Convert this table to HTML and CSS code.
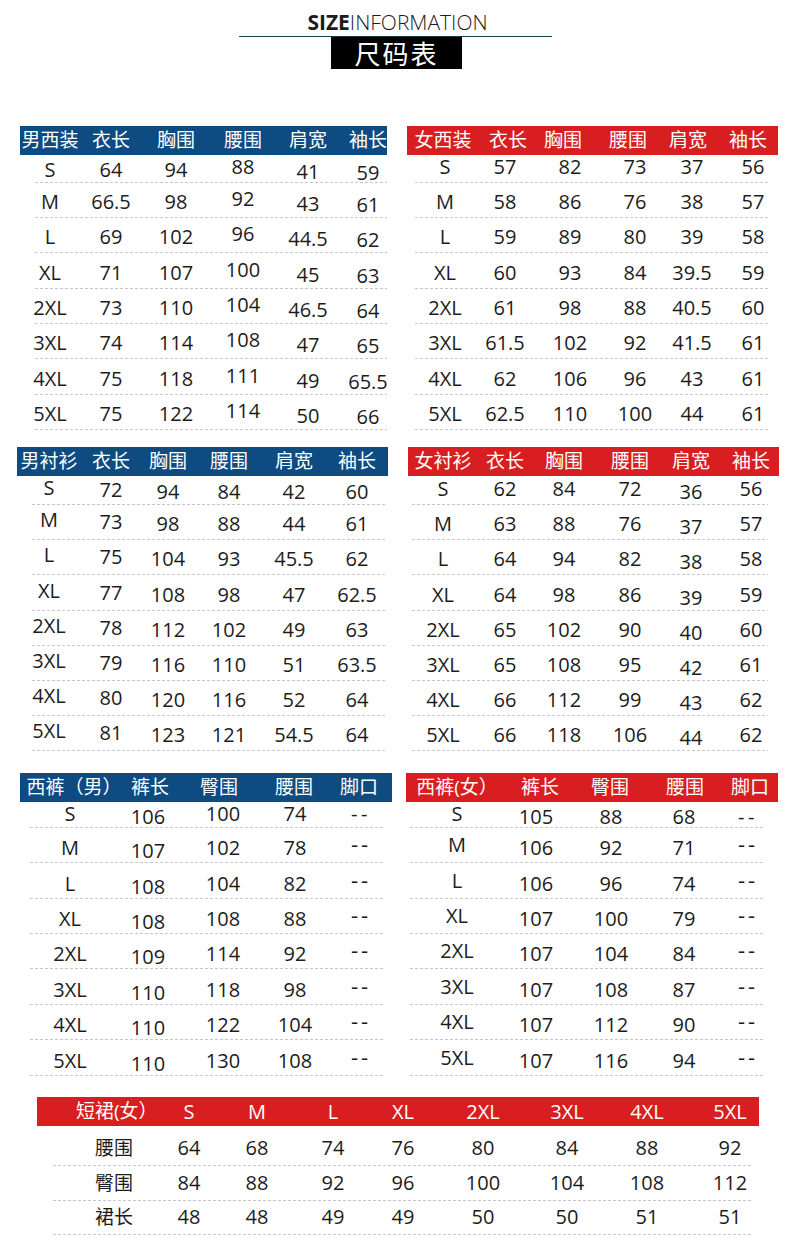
FILE: index.html
```html
<!DOCTYPE html>
<html lang="zh-CN">
<head>
<meta charset="utf-8">
<title>尺码表</title>
<link rel="stylesheet" href="styles.css">
</head>
<body>
<h1 class="title"><b>SIZE</b><span>INFORMATION</span></h1>
<div class="rule"></div>
<div class="badge">尺码表</div>

<div class="pair p1">
  <section class="tbl l1">
    <div class="hd blue"><span>男西装</span><span>衣长</span><span>胸围</span><span>腰围</span><span>肩宽</span><span>袖长</span></div>
    <div class="row"><span>S</span><span>64</span><span>94</span><span>88</span><span>41</span><span>59</span></div>
    <div class="row"><span>M</span><span>66.5</span><span>98</span><span>92</span><span>43</span><span>61</span></div>
    <div class="row"><span>L</span><span>69</span><span>102</span><span>96</span><span>44.5</span><span>62</span></div>
    <div class="row"><span>XL</span><span>71</span><span>107</span><span>100</span><span>45</span><span>63</span></div>
    <div class="row"><span>2XL</span><span>73</span><span>110</span><span>104</span><span>46.5</span><span>64</span></div>
    <div class="row"><span>3XL</span><span>74</span><span>114</span><span>108</span><span>47</span><span>65</span></div>
    <div class="row"><span>4XL</span><span>75</span><span>118</span><span>111</span><span>49</span><span>65.5</span></div>
    <div class="row"><span>5XL</span><span>75</span><span>122</span><span>114</span><span>50</span><span>66</span></div>
  </section>
  <section class="tbl r1">
    <div class="hd red"><span>女西装</span><span>衣长</span><span>胸围</span><span>腰围</span><span>肩宽</span><span>袖长</span></div>
    <div class="row"><span>S</span><span>57</span><span>82</span><span>73</span><span>37</span><span>56</span></div>
    <div class="row"><span>M</span><span>58</span><span>86</span><span>76</span><span>38</span><span>57</span></div>
    <div class="row"><span>L</span><span>59</span><span>89</span><span>80</span><span>39</span><span>58</span></div>
    <div class="row"><span>XL</span><span>60</span><span>93</span><span>84</span><span>39.5</span><span>59</span></div>
    <div class="row"><span>2XL</span><span>61</span><span>98</span><span>88</span><span>40.5</span><span>60</span></div>
    <div class="row"><span>3XL</span><span>61.5</span><span>102</span><span>92</span><span>41.5</span><span>61</span></div>
    <div class="row"><span>4XL</span><span>62</span><span>106</span><span>96</span><span>43</span><span>61</span></div>
    <div class="row"><span>5XL</span><span>62.5</span><span>110</span><span>100</span><span>44</span><span>61</span></div>
  </section>
</div>

<div class="pair p2">
  <section class="tbl l2">
    <div class="hd blue"><span>男衬衫</span><span>衣长</span><span>胸围</span><span>腰围</span><span>肩宽</span><span>袖长</span></div>
    <div class="row"><span>S</span><span>72</span><span>94</span><span>84</span><span>42</span><span>60</span></div>
    <div class="row"><span>M</span><span>73</span><span>98</span><span>88</span><span>44</span><span>61</span></div>
    <div class="row"><span>L</span><span>75</span><span>104</span><span>93</span><span>45.5</span><span>62</span></div>
    <div class="row"><span>XL</span><span>77</span><span>108</span><span>98</span><span>47</span><span>62.5</span></div>
    <div class="row"><span>2XL</span><span>78</span><span>112</span><span>102</span><span>49</span><span>63</span></div>
    <div class="row"><span>3XL</span><span>79</span><span>116</span><span>110</span><span>51</span><span>63.5</span></div>
    <div class="row"><span>4XL</span><span>80</span><span>120</span><span>116</span><span>52</span><span>64</span></div>
    <div class="row"><span>5XL</span><span>81</span><span>123</span><span>121</span><span>54.5</span><span>64</span></div>
  </section>
  <section class="tbl r2">
    <div class="hd red"><span>女衬衫</span><span>衣长</span><span>胸围</span><span>腰围</span><span>肩宽</span><span>袖长</span></div>
    <div class="row"><span>S</span><span>62</span><span>84</span><span>72</span><span>36</span><span>56</span></div>
    <div class="row"><span>M</span><span>63</span><span>88</span><span>76</span><span>37</span><span>57</span></div>
    <div class="row"><span>L</span><span>64</span><span>94</span><span>82</span><span>38</span><span>58</span></div>
    <div class="row"><span>XL</span><span>64</span><span>98</span><span>86</span><span>39</span><span>59</span></div>
    <div class="row"><span>2XL</span><span>65</span><span>102</span><span>90</span><span>40</span><span>60</span></div>
    <div class="row"><span>3XL</span><span>65</span><span>108</span><span>95</span><span>42</span><span>61</span></div>
    <div class="row"><span>4XL</span><span>66</span><span>112</span><span>99</span><span>43</span><span>62</span></div>
    <div class="row"><span>5XL</span><span>66</span><span>118</span><span>106</span><span>44</span><span>62</span></div>
  </section>
</div>

<div class="pair p3">
  <section class="tbl l3">
    <div class="hd blue"><span>西裤（男）</span><span>裤长</span><span>臀围</span><span>腰围</span><span>脚口</span></div>
    <div class="row"><span>S</span><span>106</span><span>100</span><span>74</span><span>--</span></div>
    <div class="row"><span>M</span><span>107</span><span>102</span><span>78</span><span>--</span></div>
    <div class="row"><span>L</span><span>108</span><span>104</span><span>82</span><span>--</span></div>
    <div class="row"><span>XL</span><span>108</span><span>108</span><span>88</span><span>--</span></div>
    <div class="row"><span>2XL</span><span>109</span><span>114</span><span>92</span><span>--</span></div>
    <div class="row"><span>3XL</span><span>110</span><span>118</span><span>98</span><span>--</span></div>
    <div class="row"><span>4XL</span><span>110</span><span>122</span><span>104</span><span>--</span></div>
    <div class="row"><span>5XL</span><span>110</span><span>130</span><span>108</span><span>--</span></div>
  </section>
  <section class="tbl r3">
    <div class="hd red"><span>西裤(女）</span><span>裤长</span><span>臀围</span><span>腰围</span><span>脚口</span></div>
    <div class="row"><span>S</span><span>105</span><span>88</span><span>68</span><span>--</span></div>
    <div class="row"><span>M</span><span>106</span><span>92</span><span>71</span><span>--</span></div>
    <div class="row"><span>L</span><span>106</span><span>96</span><span>74</span><span>--</span></div>
    <div class="row"><span>XL</span><span>107</span><span>100</span><span>79</span><span>--</span></div>
    <div class="row"><span>2XL</span><span>107</span><span>104</span><span>84</span><span>--</span></div>
    <div class="row"><span>3XL</span><span>107</span><span>108</span><span>87</span><span>--</span></div>
    <div class="row"><span>4XL</span><span>107</span><span>112</span><span>90</span><span>--</span></div>
    <div class="row"><span>5XL</span><span>107</span><span>116</span><span>94</span><span>--</span></div>
  </section>
</div>

<section class="tbl sk">
  <div class="hd red"><span>短裙(女）</span><span>S</span><span>M</span><span>L</span><span>XL</span><span>2XL</span><span>3XL</span><span>4XL</span><span>5XL</span></div>
  <div class="row"><span>腰围</span><span>64</span><span>68</span><span>74</span><span>76</span><span>80</span><span>84</span><span>88</span><span>92</span></div>
  <div class="row"><span>臀围</span><span>84</span><span>88</span><span>92</span><span>96</span><span>100</span><span>104</span><span>108</span><span>112</span></div>
  <div class="row"><span>裙长</span><span>48</span><span>48</span><span>49</span><span>49</span><span>50</span><span>50</span><span>51</span><span>51</span></div>
</section>
</body>
</html>
```
FILE: styles.css
```css
* { box-sizing: border-box; }

body {
  margin: 0;
  background: #fff;
  color: #1c1c1c;
  font-family: "Open Sans", "Noto Sans CJK SC", sans-serif;
}

.title {
  margin: 0;
  padding: 8px 0 0 5px;
  font-size: 21px;
  line-height: 28px;
  font-weight: 300;
  text-align: center;
  color: #1c1c1c;
}
.title b { font-weight: 700; }

.rule {
  width: 313px;
  margin-left: 239px;
  border-top: 1.5px solid #1f3b4b;
}

.badge {
  width: 131px;
  height: 32px;
  margin-left: 331px;
  background: #000;
  color: #fff;
  font-family: "Noto Sans CJK SC", sans-serif;
  font-size: 26px;
  line-height: 32px;
  text-align: center;
  letter-spacing: 2px;
}

.pair {
  display: grid;
  grid-template-columns: 406px 384px;
  align-items: start;
}
.p1 { margin-top: 56.5px; --rh: 35.4px; --r1: 28px; }
.p2 { margin-top: 17px; --rh: 35.1px; --r1: 29px; }
.p3 { margin-top: 22px; --rh: 35.4px; --r1: 26px; --pb: 3px; }

.hd {
  display: grid;
  grid-template-columns: var(--hc);
  height: 29px;
  align-items: center;
  justify-items: center;
  color: #fff;
  font-size: 19px;
  line-height: 29px;
  white-space: nowrap;
}
.blue { background: #0e4b80; }
.red { background: #d81e20; }

.row {
  display: grid;
  grid-template-columns: var(--vc);
  height: var(--rh);
  align-items: end;
  justify-items: center;
  font-size: 20px;
  white-space: nowrap;
  background: repeating-linear-gradient(90deg, #c8c8c8 0 3px, transparent 3px 5px) var(--dx) 100% / var(--dw) 1px no-repeat;
}
.hd + .row { height: var(--r1); }
.row span {
  line-height: 24px;
  padding-bottom: var(--pb, 4px);
}

.l1 { margin-left: 20px; width: 367px; --hc: 60px 62px 68px 66px 64px 56px; --vc: 60px 62px 68px 66px 64px 56px; --dx: 15px; --dw: 353px; }
.r1 { margin-left: 1px; width: 371px; --hc: 72px 58px 52px 78px 42px 78px; --vc: 76px 44px 86px 44px 70px 52px; --dx: 8px; --dw: 355px; }
.l2 { margin-left: 17px; width: 371px; --hc: 64px 60px 54px 68px 62px 64px; --vc: 64px 60px 54px 68px 62px 64px; --dx: 15px; --dw: 355px; }
.r2 { margin-left: 2px; width: 371px; --hc: 70px 54px 64px 68px 54px 66px; --vc: 70px 54px 64px 68px 54px 66px; --dx: 4px; --dw: 356px; }
.l3 { margin-left: 20px; width: 372px; --hc: 108px 44px 94px 56px 74px; --vc: 100px 56px 94px 50px 82px; --dx: 10px; --dw: 355px; }
.r3 { margin-left: 0; width: 372px; --hc: 102px 64px 76px 74px 56px; --vc: 102px 56px 94px 52px 76px; --dx: 4px; --dw: 355px; }

/* "--" placeholder in the 脚口 column */
.l3 .row span:nth-child(5),
.r3 .row span:nth-child(5) {
  font-size: 22px;
  letter-spacing: 3px;
  padding-bottom: 8px;
}
.l3 .hd + .row span:nth-child(5),
.r3 .hd + .row span:nth-child(5) {
  font-size: 20px;
  letter-spacing: 3.5px;
  padding-bottom: 3px;
}

/* slight per-column vertical drift, as in the source artwork */
.l1 .row span:nth-child(4) { margin-bottom: 3px; }
.l1 .row span:nth-child(5) { margin-bottom: -2px; }
.l1 .row span:nth-child(6) { margin-bottom: -3px; }
.l2 .row span:nth-child(1) { margin-bottom: 4px; }
.l2 .row span:nth-child(2) { margin-bottom: 2px; }
.r2 .row span:nth-child(5) { margin-bottom: -3px; }
.l3 .row span:nth-child(2) { margin-bottom: -3px; }
.r3 .row span:nth-child(1) { margin-bottom: 3px; }

.sk {
  margin: 21.5px 0 0 37px;
  width: 722px;
  --hc: 115px 74px 62px 90px 50px 110px 58px 102px 64px;
  --vc: 115px 74px 62px 90px 50px 110px 58px 102px 64px;
  --dx: 16px;
  --dw: 698px;
  --pb: 6px;
}
.sk .row { height: 34.5px; }
.sk .hd + .row { height: 40px; }
.sk span:first-child {
  justify-self: stretch;
  text-align: center;
  padding-left: 39px;
}
.sk .hd span:not(:first-child) { font-size: 20px; }
.sk .row span:first-child { font-size: 19px; }
```
